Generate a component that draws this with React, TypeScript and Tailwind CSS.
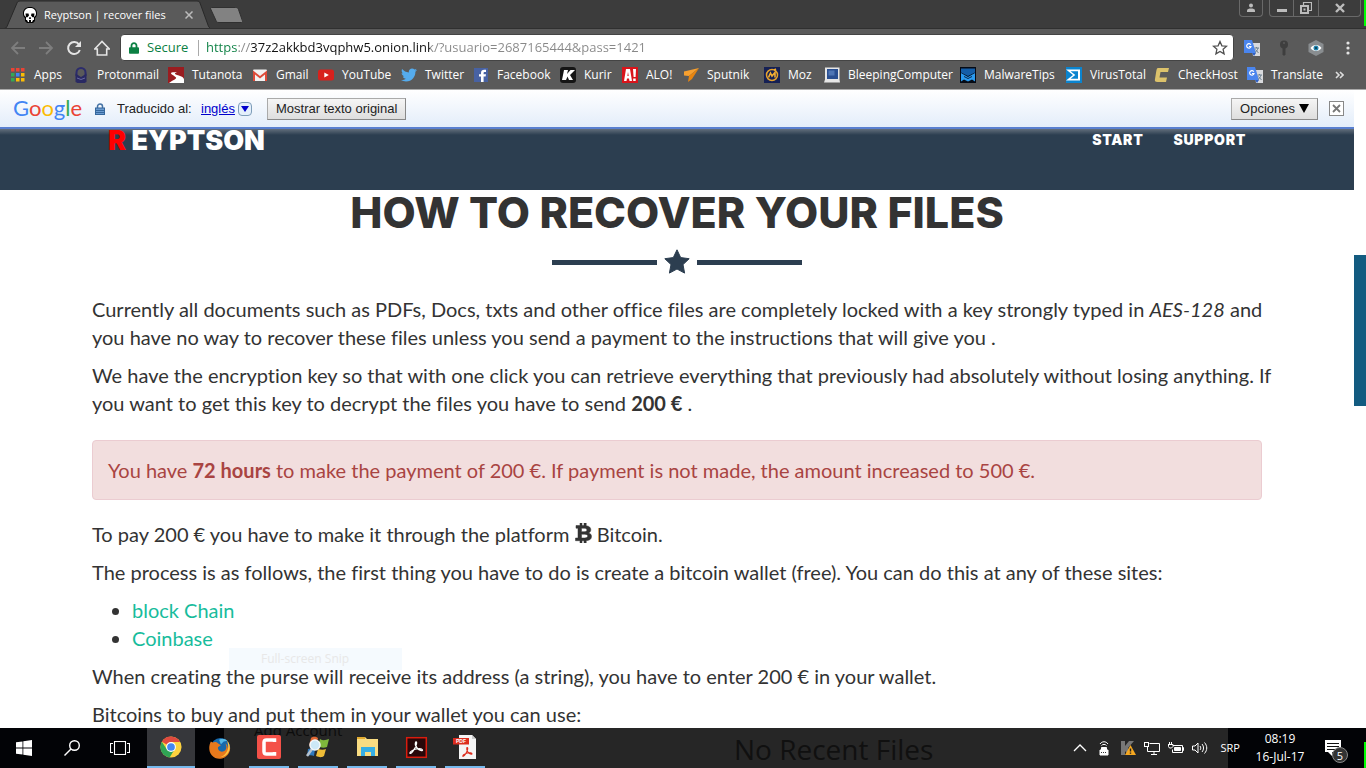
import React from "react";
import { FaTwitter, FaLock } from "react-icons/fa";

const SkullIcon = () => (
  <svg viewBox="0 0 16 16" className="h-4 w-4 shrink-0">
    <path d="M8 0C3.500 0 1 2.500 1 6.500c0 2 .8 3.500 2 4.500v3l2 2h6l2-2v-3c1.200-1 2-2.500 2-4.500C15 2.500 12.500 0 8 0z" fill="#000" />
    <path d="M8 1C4.300 1 2 3 2 6.500c0 1.600.5 2.700 2 3.500v3h1l1 2h1v-2h2v2h1l1-2h1v-3c1.500-.8 2-1.900 2-3.500C14 3 11.700 1 8 1z" fill="#fff" />
    <path d="M3.500 6.500h3l.5 2-1.500 1.800H4zM9.500 6.500h3l-.5 3.800h-1.500L9 8.500zM7.500 10h1l.5 2H7z" fill="#000" />
  </svg>
);

const AppsIcon = () => (
  <svg viewBox="0 0 16 16" className="h-4 w-4">
    {["#ea4335", "#ea4335", "#ea4335", "#34a853", "#4285f4", "#fbbc05", "#34a853", "#fbbc05", "#fbbc05"].map((c, i) => (
      <rect key={i} x={1 + (i % 3) * 5} y={1 + Math.floor(i / 3) * 5} width="3.500" height="3.500" fill={c} />
    ))}
  </svg>
);
const ProtonIcon = () => (
  <svg viewBox="0 0 16 16" className="h-4 w-4" fill="none">
    <path d="M3.500 9V5.500a4.500 4.500 0 0 1 9 0V9" stroke="#2c2c6c" strokeWidth="2" />
    <path d="M2.500 6.500L8 10l5.500-3.500V15l-2 1h-7l-2-1z" fill="#292963" />
    <path d="M4 11l4 1.500 4-1.500" stroke="#6868a0" />
  </svg>
);
const TutaIcon = () => (
  <svg viewBox="0 0 16 16" className="h-4 w-4">
    <rect width="16" height="16" fill="#9a1c20" />
    <path d="M1 16c4-3 8-4 7-5.500S3 7.500 3 6.200 6.500 5 9 5.500C7 6 6 6.500 8 7.500s8 2 8 5V16z" fill="#fff" />
  </svg>
);
const GmailIcon = () => (
  <svg viewBox="0 0 16 16" className="h-4 w-4">
    <rect x="1" y="2.500" width="14" height="11.500" rx="1" fill="#f2f2f2" />
    <path d="M1 3.500L8 9l7-5.500V14h-2V7.500l-5 4-5-4V14H1z" fill="#dd4b39" />
  </svg>
);
const YouTubeIcon = () => (
  <svg viewBox="0 0 16 16" className="h-4 w-4">
    <rect x="0" y="2.500" width="16" height="11" rx="2.500" fill="#d8211c" />
    <path d="M6.300 5.500v5L10.800 8z" fill="#fff" />
  </svg>
);
const FacebookIcon = () => (
  <svg viewBox="0 0 16 16" className="h-4 w-4">
    <rect x="1" y="1" width="14" height="14" fill="#4862a3" />
    <path d="M8 15V9.500H6V7.300h2V6c0-2.200 1.200-3.300 3.200-3.300H13V5h-1.300c-.9 0-1.100.5-1.100 1.200v1.100H13l-.4 2.200h-2V15z" fill="#fff" />
  </svg>
);
const KurirIcon = () => (
  <svg viewBox="0 0 16 16" className="h-4 w-4">
    <rect width="16" height="16" rx="3" fill="#151515" />
    <path d="M4 3h4l-1 4 3.500-4H15L10 8l3 5H9L7.500 9.500 6 13H2z" fill="#fff" />
  </svg>
);
const AloIcon = () => (
  <svg viewBox="0 0 16 16" className="h-4 w-4">
    <rect width="16" height="16" fill="#d9141b" />
    <path d="M4 2h4l2 12H7.500L7 11.500H5L4.500 14H2zm1.400 7h1.300L6 5zM11 2h3l-.4 8h-2zM11.200 11.500h2.500V14h-2.500z" fill="#fff" fillRule="evenodd" />
  </svg>
);
const SputnikIcon = () => (
  <svg viewBox="0 0 16 16" className="h-4 w-4">
    <path d="M16 1L1 4.500v4L6 9z" fill="#f7a02f" />
    <path d="M16 1L6 9l-1 6 4-3z" fill="#e8850f" />
  </svg>
);
const MozIcon = () => (
  <svg viewBox="0 0 16 16" className="h-4 w-4" fill="none">
    <rect width="16" height="16" fill="#152054" />
    <circle cx="8" cy="8" r="5.500" stroke="#e5a22e" strokeWidth="1.500" />
    <path d="M4.500 10.500L6.500 6l1.500 3 3-3.500v5M10 3l2-1" stroke="#f1ad33" strokeWidth="1.600" />
  </svg>
);
const BleepIcon = () => (
  <svg viewBox="0 0 16 16" className="h-4 w-4">
    <path d="M1 .5h14.500v12l.5 3H0l1-3z" fill="#e6e6e6" />
    <rect x="3" y="2" width="11" height="10" fill="#2a4f91" />
    <rect x="4.500" y="3.500" width="6" height="5" fill="#4f76b5" />
  </svg>
);
const MalwareTipsIcon = () => (
  <svg viewBox="0 0 16 16" className="h-4 w-4">
    <rect width="16" height="16" fill="#050b16" />
    <path d="M1 1.500h14v4L8 9 1 5.500z" fill="#145ea8" />
    <path d="M1 6l7 4 7-4v8.500l-3-2-4 2-4-2-3 2z" fill="#2a9bf0" />
    <path d="M4 9.500l4 2 4-2" fill="none" stroke="#0a2547" />
  </svg>
);
const VirusTotalIcon = () => (
  <svg viewBox="0 0 16 16" className="h-4 w-4">
    <rect width="16" height="16" fill="#0a84cf" />
    <path d="M0 2.500L7 8l-7 5.500h14v-11z" fill="#fff" />
    <path d="M4.500 4.200H12v7.600H4.500L9.300 8z" fill="#0a84cf" />
  </svg>
);
const CheckHostIcon = () => (
  <svg viewBox="0 0 16 16" className="h-4 w-4">
    <path d="M4 1h11l-1 4H6.500L5.500 10.500H13l-1 4.500H3.500C1 15 .5 14 1 12L2.300 4C2.700 2 3 1 4 1z" fill="#dcc26b" />
  </svg>
);
const TranslateIcon = () => (
  <svg viewBox="0 0 16 16" className="h-4 w-4" fill="none">
    <path d="M7 3h9v13H9z" fill="#d9dadd" />
    <path d="M0 0h8l4 13H0z" fill="#4a85ee" />
    <path d="M8 13h4l-2 3z" fill="#2d5fc4" />
    <path d="M6.800 4.800A2.200 2.200 0 1 0 7 6.500H5" stroke="#fff" strokeWidth="1.200" />
    <path d="M10.500 8h4.500M12.500 7v1M14 8c-.5 2-1.500 3.500-3 4.500M11.500 9.500l3 3.500" stroke="#6d8190" />
  </svg>
);
const TwitterIcon = () => <FaTwitter className="h-4 w-4 text-[#55acee]" />;

const bookmarks: [string, string, React.FC][] = [
  ["Apps", "w-[63px]", AppsIcon],
  ["Protonmail", "w-[95px]", ProtonIcon],
  ["Tutanota", "w-[84px]", TutaIcon],
  ["Gmail", "w-[66px]", GmailIcon],
  ["YouTube", "w-[83px]", YouTubeIcon],
  ["Twitter", "w-[72px]", TwitterIcon],
  ["Facebook", "w-[87px]", FacebookIcon],
  ["Kurir", "w-[62px]", KurirIcon],
  ["ALO!", "w-[61px]", AloIcon],
  ["Sputnik", "w-[81px]", SputnikIcon],
  ["Moz", "w-[60px]", MozIcon],
  ["BleepingComputer", "w-[136px]", BleepIcon],
  ["MalwareTips", "w-[106px]", MalwareTipsIcon],
  ["VirusTotal", "w-[88px]", VirusTotalIcon],
  ["CheckHost", "w-[93px]", CheckHostIcon],
  ["Translate", "w-[84px]", TranslateIcon],
];

function TabStrip() {
  return (
    <header className="flex h-7 shrink-0 bg-[#3c3c3c]">
      <div className="relative flex h-7 w-[210px] items-center pt-[2px] pl-[22px] text-[11px] text-white">
        <svg viewBox="0 0 210 28" className="absolute inset-0 h-7 w-[210px]">
          <path d="M0 28.500h4c2 0 2.500-1 3-2L17 3c.6-1.300 1-2 3-2h177c2 0 2.500.7 3 2l8 22c.7 2 1 3 3 3.500z" fill="#5a5a5a" stroke="#282828" />
        </svg>
        <span className="relative flex items-center">
          <SkullIcon />
          <span className="ml-1.5 w-[138px] whitespace-nowrap">Reyptson | recover files</span>
          <button aria-label="Close tab" className="ml-[3px]">
            <svg viewBox="0 0 8 8" className="h-2 w-2"><path d="M.5.5l7 7m0-7l-7 7" stroke="#bbb" strokeWidth="1.500" /></svg>
          </button>
        </span>
      </div>
      <button aria-label="New tab" className="h-7 w-8">
        <svg viewBox="0 0 32 28" className="h-7 w-8">
          <path d="M1.500 7.500h24c2 0 2.500.6 3 2l4 11.500c.4 1.300 0 1.500-1 1.500H9c-2 0-2.500-.5-3-2L.7 9c-.3-1 0-1.500.8-1.500z" fill="#828282" stroke="#303030" />
        </svg>
      </button>
      <div className="ml-auto flex h-[17px] gap-[6px] text-[#bcbcbc]">
        <button aria-label="Profile" className="flex w-6 items-center justify-center rounded-b border border-t-0 border-[#696969]">
          <svg viewBox="0 0 10 10" className="h-2.5 w-2.5" fill="currentColor"><circle cx="5" cy="2.500" r="2" /><path d="M1 9V7.500C1 6 3 5.500 5 5.500s4 .5 4 2V9z" /></svg>
        </button>
        <div className="mr-[3px] flex rounded-b border border-t-0 border-[#696969]">
          <button aria-label="Minimize" className="flex w-6 items-center justify-center border-r border-[#696969]">
            <svg viewBox="0 0 12 10" className="h-2.5 w-3"><rect x="1" y="6" width="10" height="3" fill="#bcbcbc" /></svg>
          </button>
          <button aria-label="Restore" className="flex w-[25px] items-center justify-center border-r border-[#696969]">
            <svg viewBox="0 0 12 12" className="h-3 w-3" fill="none" stroke="#bcbcbc"><path d="M3.500 3V.5h8v8H9" strokeWidth="1.200" /><rect x="1" y="4" width="7" height="7" strokeWidth="2" /><rect x="4" y="7" width="1" height="1" /></svg>
          </button>
          <button aria-label="Close" className="flex w-[41px] items-center justify-center">
            <svg viewBox="0 0 10 10" className="h-2.5 w-2.5"><path d="M1 1l8 8m0-8L1 9" stroke="#bcbcbc" strokeWidth="2.400" /></svg>
          </button>
        </div>
        <div className="-ml-[6px] h-[26px] w-0.5 bg-[#00ff00]" />
      </div>
    </header>
  );
}

function Toolbar() {
  return (
    <div className="flex h-[34px] shrink-0 items-center border-t border-[#303030] pt-1">
      <div className="flex w-[120px] items-center gap-3 pl-[10px]">
        <button aria-label="Back"><svg viewBox="0 0 16 16" className="h-4 w-4" fill="none" stroke="#7e7e7e" strokeWidth="1.800"><path d="M15 8H2m6-6L2 8l6 6" /></svg></button>
        <button aria-label="Forward"><svg viewBox="0 0 16 16" className="h-4 w-4" fill="none" stroke="#7e7e7e" strokeWidth="1.800"><path d="M1 8h13M8 2l6 6-6 6" /></svg></button>
        <button aria-label="Reload"><svg viewBox="0 0 16 16" className="h-4 w-4" fill="none" stroke="#e4e4e4" strokeWidth="2"><path d="M13 4.500A6 6 0 1 0 13.800 10" /><path d="M15 1v6H9z" fill="#e4e4e4" stroke="none" /></svg></button>
        <button aria-label="Home"><svg viewBox="0 0 16 16" className="h-4 w-4" fill="none" stroke="#e4e4e4" strokeWidth="1.600"><path d="M.7 9L8 1.500 15.300 9H12.700v6H3.300V9z" /></svg></button>
      </div>
      <div className="flex h-[27px] flex-1 items-center rounded-sm border border-[#444] bg-white text-[13px]">
        <FaLock className="ml-2 h-3 w-[10px] text-[#0b8043]" />
        <label htmlFor="url" className="ml-2 w-[51px] text-[#0b8043]">Secure</label>
        <span className="h-4 w-px bg-[#aaa]" />
        <input
          id="url"
          className="ml-[7px] flex-1 bg-[linear-gradient(90deg,#0b8043_0px,#0b8043_32px,#888_32px,#888_45px,#111_45px,#111_224px,#888_224px)] bg-clip-text text-[13px] text-transparent caret-black outline-none"
          defaultValue="https://37z2akkbd3vqphw5.onion.link/?usuario=2687165444&pass=1421"
        />
        <button aria-label="Bookmark this page" className="mr-[5px]">
          <svg viewBox="0 0 16 16" className="h-4 w-4" fill="none" stroke="#505050" strokeWidth="1.300"><path d="M8 1.500l1.900 4.300 4.700.4-3.500 3.100 1 4.600L8 11.500l-4.100 2.400 1-4.600L1.400 6.200l4.700-.4z" /></svg>
        </button>
      </div>
      <div className="flex w-[132px] items-center gap-4 pl-[10px]">
        <button aria-label="Google Translate"><TranslateIcon /></button>
        <button aria-label="Passwords"><svg viewBox="0 0 16 16" className="h-4 w-4"><circle cx="8" cy="4.500" r="4" fill="#3e3e3e" /><path d="M6.500 7h3v7.500L8 16l-1.500-1.500z" fill="#3e3e3e" /><circle cx="8" cy="3" r="1" fill="#5a5a5a" /></svg></button>
        <button aria-label="Privacy"><svg viewBox="0 0 16 16" className="h-4 w-4"><path d="M8 0l7.500 4v8L8 16 .5 12V4z" fill="#898d90" /><path d="M2.500 8C5 4 11 4 13.500 8 11 12 5 12 2.500 8z" fill="#fff" /><circle cx="8" cy="8" r="2.500" fill="#2183ad" /><circle cx="8" cy="8" r="1" fill="#073449" /></svg></button>
        <button aria-label="Menu"><svg viewBox="0 0 16 16" className="h-4 w-4" fill="#e4e4e4"><circle cx="8" cy="3" r="1.600" /><circle cx="8" cy="8" r="1.600" /><circle cx="8" cy="13" r="1.600" /></svg></button>
      </div>
    </div>
  );
}

function Bookmarks() {
  return (
    <nav className="flex h-7 shrink-0 items-center overflow-hidden border-b border-[#aaa] pb-px pl-[10px] text-xs text-white">
      {bookmarks.map(([name, width, Icon]) => (
        <a key={name} href="#" className={"flex shrink-0 items-center gap-2 whitespace-nowrap " + width}>
          <Icon />
          {name}
        </a>
      ))}
      <button aria-label="More bookmarks" className="ml-1">
        <svg viewBox="0 0 9 8" className="h-2 w-[9px]" fill="none" stroke="#ddd" strokeWidth="1.600"><path d="M1 1l3 3-3 3M5 1l3 3-3 3" /></svg>
      </button>
    </nav>
  );
}

function TranslateBar() {
  const button = "h-[22px] border border-[#aaa] border-r-[#888] border-b-[#888] bg-linear-to-b from-[#f5f5f5] to-[#dedede] px-2 text-[13px] leading-5 whitespace-nowrap text-[#222]";
  return (
    <div className="flex h-[39px] shrink-0 items-center border-b-2 border-[#587fd0] bg-linear-to-b from-white to-[#e3edfa] pr-[10px] pl-[13px] font-['Liberation_Sans',sans-serif] text-[13px] text-[#222]">
      <span className="w-[82px] pb-0.5 font-[Lato,sans-serif] text-[22px] leading-8">
        <span className="text-[#4285f4]">G</span><span className="text-[#ea4335]">o</span><span className="text-[#fbbc05]">o</span><span className="text-[#4285f4]">g</span><span className="text-[#34a853]">l</span><span className="text-[#ea4335]">e</span>
      </span>
      <svg viewBox="0 0 10 12" className="h-3 w-[10px]" fill="none"><path d="M2.500 6V3.500a2.500 2.500 0 0 1 5 0V6" stroke="#4673a5" strokeWidth="1.500" /><rect x=".5" y="5" width="9" height="6.500" fill="#6b9bd0" stroke="#35679c" /><path d="M1 7.500h8M1 9.500h8" stroke="#35679c" /></svg>
      <span className="ml-3 w-[84px]">Traducido al:</span>
      <a href="#" className="text-[#0000cc] underline">inglés</a>
      <button aria-label="Choose language" className="ml-[3px] flex h-[14px] w-[14px] items-center justify-center rounded-sm border border-[#7e9db9] bg-[#e4effb]">
        <svg viewBox="0 0 8 6" className="h-1.5 w-2"><path d="M0 0h8L4 6z" fill="#00c" /></svg>
      </button>
      <button className={button + " ml-[15px]"}>Mostrar texto original</button>
      <button className={button + " ml-auto flex items-center gap-1"}>Opciones <svg viewBox="0 0 10 9" className="h-[9px] w-[10px]"><path d="M0 0h10L5 9z" fill="#000" /></svg></button>
      <button aria-label="Close translation bar" className="ml-[11px] flex h-[15px] w-[15px] items-center justify-center border border-[#888] bg-white">
        <svg viewBox="0 0 9 9" className="h-[9px] w-[9px]"><path d="M1 1l7 7m0-7L1 8" stroke="#777" strokeWidth="1.800" /></svg>
      </button>
    </div>
  );
}

const StarMark = () => (
  <svg viewBox="0 0 26 26" className="h-[26px] w-[26px]"><path d="M13 .8l3.700 7.800 8.500 1.100-6.200 5.900 1.600 8.500L13 20l-7.600 4.100L7 15.600.8 9.700l8.500-1.100z" fill="#2c3e50" stroke="#2c3e50" strokeLinejoin="round" /></svg>
);
const BitcoinMark = () => (
  <svg viewBox="0 0 17 20" className="inline h-5 w-[17px] align-[-1px]">
    <path d="M1 2.500h4V0h2v2.500h2V0h2.200v2.700c2.900.4 4.600 1.800 4.600 4 0 1.500-.8 2.600-2.300 3.200 2 .5 3 1.800 3 3.600 0 2.500-1.900 4-5.300 4.200V20H9v-2.300H7V20H5v-2.300H.5V15H3V5.200H1zM6.500 5.200v3.500h2.400c2 0 3-.6 3-1.800 0-1.100-1-1.700-3-1.700zm0 6V15h3c2.100 0 3.200-.7 3.200-1.900s-1.100-1.900-3.200-1.900z" fill="#333" stroke="#333" strokeWidth=".5" fillRule="evenodd" />
  </svg>
);

function Page() {
  return (
    <main className="min-w-0 flex-1 overflow-hidden bg-white font-[Lato,sans-serif] text-xl leading-7 text-[#333] [font-variant-ligatures:none]">
      <TranslateBar />
      <div className="h-[61px] bg-[#2c3e50] bg-[linear-gradient(#626e7b,#2c3e50_6px)] font-[Inter,sans-serif] font-black text-white">
        <div className="mx-auto flex h-[22px] max-w-[1170px] items-center px-4">
          <a href="#" className="text-[27px] leading-none whitespace-nowrap"><span className="text-[#f00]">R</span> EYPTSON</a>
          <a href="#" className="mr-[30px] ml-auto text-sm tracking-wider">START</a>
          <a href="#" className="text-sm tracking-wider">SUPPORT</a>
        </div>
      </div>
      <div className="mx-auto max-w-[1170px]">
        <h1 className="text-center font-[Inter,sans-serif] text-[43px] leading-[45px] font-extrabold">HOW TO RECOVER YOUR FILES</h1>
        <div className="mt-[13px] mb-[19px] flex h-7 items-center justify-center gap-[7px]">
          <span className="h-[5px] w-[105px] bg-[#2c3e50]" />
          <StarMark />
          <span className="h-[5px] w-[105px] bg-[#2c3e50]" />
        </div>
        <p className="mb-[10px] xl:whitespace-nowrap">Currently all documents such as PDFs, Docs, txts and other office files are completely locked with a key strongly typed in <em>AES-128</em> and{" "}<br className="hidden xl:inline" />you have no way to recover these files unless you send a payment to the instructions that will give you .</p>
        <p className="xl:whitespace-nowrap">We have the encryption key so that with one click you can retrieve everything that previously had absolutely without losing anything. If{" "}<br className="hidden xl:inline" />you want to get this key to decrypt the files you have to send <strong>200 €</strong> .</p>
        <div className="mt-[23px] mb-5 rounded border border-[#ebccd1] bg-[#f2dede] p-[15px] text-[#a94442]">You have <strong>72 hours</strong> to make the payment of 200 €. If payment is not made, the amount increased to 500 €.</div>
        <p className="mb-[10px]">To pay 200 € you have to make it through the platform <BitcoinMark /> Bitcoin.</p>
        <p className="mb-[10px]">The process is as follows, the first thing you have to do is create a bitcoin wallet (free). You can do this at any of these sites:</p>
        <div className="relative mb-[10px]">
          <ul className="list-disc pl-10">
            <li><a href="#" className="text-[#18bc9c]">block Chain</a></li>
            <li><a href="#" className="text-[#18bc9c]">Coinbase</a></li>
          </ul>
          <div aria-hidden="true" className="absolute top-[52px] left-[137px] h-[22px] w-[173px] bg-[#f5fafe] pl-8 font-['Open_Sans',sans-serif] text-xs leading-[22px] text-[#e8e8e8]">Full-screen Snip</div>
        </div>
        <p className="relative mb-[10px]">When creating the purse will receive its address (a string), you have to enter 200 € in your wallet.</p>
        <p>Bitcoins to buy and put them in your wallet you can use:</p>
      </div>
    </main>
  );
}

const ChromeIcon = () => (
  <svg viewBox="0 0 24 24" className="h-[22px] w-[22px]">
    <circle cx="12" cy="12" r="11.500" fill="#fdd23f" />
    <path d="M12 12L2 6.200A11.500 11.500 0 0 1 22 6.500H12z" fill="#e04a3f" />
    <path d="M2 6.200A11.500 11.500 0 0 0 10.500 23.400L16 14.500 12 12 7 14z" fill="#2fa455" />
    <circle cx="12" cy="12" r="5.400" fill="#fff" /><circle cx="12" cy="12" r="4.200" fill="#4587f3" />
  </svg>
);
const FirefoxIcon = () => (
  <svg viewBox="0 0 24 24" className="h-[22px] w-[22px]">
    <circle cx="12.500" cy="11.500" r="10.500" fill="#1769ac" />
    <path d="M11 3c3-2 7-1 9 1l-4 1-3 3z" fill="#56b8e5" />
    <path d="M2 5l2 1c2-1 4-1 6 1l3 2-3 2c-1 2 1 5 4 5 5 0 6-5 4-9 3 2 2 5 3 6 1-3 0-6-1-8 3 3 4 8 2 12-4 8-14 9-19 3C-1 15 0 9 2 5z" fill="#e8791c" />
    <path d="M20 4c3 4 3 8 2 11-2 5-6 7-10 7 6-2 9-7 9-12z" fill="#fcc742" />
  </svg>
);
const RecorderIcon = () => (
  <svg viewBox="0 0 24 24" className="h-6 w-6"><rect width="24" height="24" rx="2" fill="#f45148" /><path d="M17.500 7V5H9.500C7.500 5 7 5.500 7 7.500v9c0 2 .5 2.500 2.500 2.500h8v-2" fill="none" stroke="#fff" strokeWidth="3.500" /></svg>
);
const WindowsSearchIcon = () => (
  <svg viewBox="0 0 24 24" className="h-6 w-6"><path d="M5 3c3-2 5-1 7 0l-2 8c-2-1-4-2-7 0z" fill="#df6632" /><path d="M14 4c3 2 6 1 9 0l-2 8c-3 1-6 1-9-1z" fill="#7fb83c" /><path d="M2 14c3-1 5-1 7 0l-1 7c-2-1-5-1-7 0z" fill="#3079bd" /><path d="M12 14c3 1 6 1 8 0l-2 7c-3 2-5 1-8 0z" fill="#eebc37" /><path d="M6 14l-5 7" stroke="#b6c2ce" strokeWidth="2.500" /><circle cx="9" cy="10" r="5" fill="#cce8f7" stroke="#f3f7fa" strokeWidth="1.500" /></svg>
);
const ExplorerIcon = () => (
  <svg viewBox="0 0 24 24" className="h-6 w-6"><path d="M2 4V2h8l2 2h11v17H2z" fill="#f9dc82" /><path d="M2 4V2h8v2z" fill="#e3ac31" /><path d="M6 21v-9h14v9h-4v-4h-6v4z" fill="#35aee5" /></svg>
);
const AcrobatIcon = () => (
  <svg viewBox="0 0 24 24" className="h-6 w-6"><rect x="2.700" y="2.700" width="19.600" height="19.600" fill="#28080a" stroke="#d91c0e" strokeWidth="1.500" /><path d="M6 18.500c-1-1.500 3.500-4 6-4.500s6-.5 6.500 1-3.500 0-5-1.500c-2-2-2.500-4.500-2-6s1.500-.5 1 1.500C12 12 8 18.500 6 18.500z" fill="none" stroke="#fff" strokeWidth="1.200" /></svg>
);
const PdfIcon = () => (
  <svg viewBox="0 0 24 24" className="h-6 w-6">
    <path d="M6 0h13l4 4v20H6z" fill="#f5f5f5" /><path d="M19 0v4h4z" fill="#ccc" /><rect x="0" y="3" width="16" height="6.500" fill="#dc2c1d" />
    <text x="3" y="8" fontSize="5" fontWeight="bold" fill="#fff" fontFamily="Liberation Sans, sans-serif">PDF</text>
    <path d="M10 21.500c-1-1 2.500-3 4.500-3.500s4.500-.2 4.500.8-2.500 0-3.700-1.200c-1.500-1.500-1.800-3.500-1.500-4.600s1.200-.3.900 1.200c-.5 2.500-3.200 7.300-4.700 7.300z" fill="none" stroke="#dc2c1d" strokeWidth="1.100" />
  </svg>
);

const runningApps: [string, React.FC][] = [
  ["Recorder", RecorderIcon],
  ["Search tool", WindowsSearchIcon],
  ["File Explorer", ExplorerIcon],
  ["Acrobat", AcrobatIcon],
  ["PDF document", PdfIcon],
];

function Taskbar() {
  const tray = "h-4 w-4";
  return (
    <footer className="relative flex h-10 shrink-0 overflow-hidden bg-[linear-gradient(90deg,#020306_224px,#262626_224px)] text-xs text-white">
      <div aria-hidden="true" className="absolute -top-2 left-[254px] text-[15px] leading-5 text-[#0c0c0c]">Add Account</div>
      <div aria-hidden="true" className="absolute top-0 left-[734px] text-[28px] leading-[42px] text-[#101010]">No Recent Files</div>
      <button aria-label="Start" className="flex w-12 items-center justify-center"><svg viewBox="0 0 16 16" className="h-4 w-4" fill="#fff"><path d="M0 2.300L6.500 1.400v6.100H0zM7.300 1.300L16 0v7.500H7.300zM0 8.400h6.500v6.200L0 13.700zM7.300 8.400H16V16l-8.700-1.300z" /></svg></button>
      <button aria-label="Search" className="flex w-12 items-center justify-center"><svg viewBox="0 0 16 16" className="h-4 w-4" fill="none" stroke="#fff" strokeWidth="1.400"><circle cx="10.500" cy="5.500" r="4.800" /><path d="M7 9L.5 15.500" /></svg></button>
      <button aria-label="Task view" className="mr-[3px] flex w-12 items-center justify-center"><svg viewBox="0 0 20 14" className="h-[14px] w-5" fill="none" stroke="#fff" strokeWidth="1.100"><rect x="4.500" y=".5" width="11" height="13" /><path d="M3 2.500H.5v9H3M17 2.500h2.500v9H17" /></svg></button>
      <button aria-label="Chrome" className="flex w-12 items-center justify-center border-b-2 border-[#76b9ed] bg-[#36373b]"><ChromeIcon /></button>
      <button aria-label="Firefox" className="flex w-[49px] items-center justify-center"><FirefoxIcon /></button>
      {runningApps.map(([name, Icon]) => (
        <button key={name} aria-label={name} className="relative flex w-[49px] justify-center">
          <span className="flex w-10 items-center justify-center border-b-2 border-[#76b9ed]"><Icon /></span>
        </button>
      ))}
      <div className="relative z-10 ml-auto flex items-center gap-2">
        <svg viewBox="0 0 16 16" className={tray} fill="none" stroke="#fff" strokeWidth="1.300"><path d="M2 11l6-6 6 6" /></svg>
        <svg viewBox="0 0 16 16" className={tray} fill="none" stroke="#fff"><path d="M4 4c2-3 6-3 8 0M5.500 5.500c1-1.500 4-1.500 5 0" /><path d="M5.500 7.500h5V10H12v5H4v-5h1.500z" fill="#fff" /><path d="M5 12.500h1m1 0h1m1 0h1" stroke="#333" /></svg>
        <svg viewBox="0 0 16 16" className={tray}><path d="M1 1h4v5l4-5h5L8 8l6 7H8L5 11v4H1z" fill="#777" /><path d="M10.500 5L16 15H5z" fill="#f6a821" /><path d="M10.500 8.500v3M10.500 12.500v1.300" stroke="#222" strokeWidth="1.400" /></svg>
        <svg viewBox="0 0 16 16" className={tray} fill="none" stroke="#fff"><path d="M5.500 3.500h10v8H3.500V7M7 14.500h6M10 12v2.500" /><rect x=".5" y="2.500" width="4" height="4" /></svg>
        <svg viewBox="0 0 16 16" className={tray} fill="none" stroke="#fff"><path d="M5 5.500h9.500v7h-10v-3M14.500 7.500h1v3h-1M0 4.500h5v2L3.500 8h-2L.5 6.500v-2M1.500 2v2M3.500 2v2" /><path d="M6.500 7.500h6v3h-6z" fill="#fff" /></svg>
        <svg viewBox="0 0 16 16" className={tray} fill="none" stroke="#fff"><path d="M.5 6v4H3l3 3V3L3 6zM8 6c1 1.500 1 3 0 4M10 4c2 2.500 2 5.500 0 8M12.500 2.500c3 3.500 3 7.500 0 11" /></svg>
        <span className="w-6 text-right text-[11px]">SRP</span>
      </div>
      <div className="-ml-3 flex w-[138px] bg-[#020306]">
        <div className="flex w-[104px] flex-col items-center justify-center text-xs leading-[18px]">
          <time>08:19</time>
          <time className="whitespace-nowrap">16-Jul-17</time>
        </div>
        <button aria-label="5 notifications" className="relative flex-1">
          <svg viewBox="0 0 16 16" className="-ml-[7px] h-4 w-4"><path d="M0 0h16v12H7v4l-4-4H0z" fill="#fff" /><path d="M2 3.500h12M2 6.500h12M2 9.500h8" stroke="#111" /></svg>
          <span className="absolute top-[19px] left-0 flex h-4 w-4 items-center justify-center rounded-full border border-[#888] bg-[#333] text-[11px] leading-none">5</span>
        </button>
        <span className="mt-[14px] w-0.5 bg-[#00ff00]" />
      </div>
    </footer>
  );
}

export default function App() {
  return (
    <div className="flex h-screen flex-col overflow-hidden bg-[#5a5a5a] font-['Open_Sans',sans-serif]">
      <TabStrip />
      <Toolbar />
      <Bookmarks />
      <div className="flex min-h-0 flex-1 overflow-hidden">
        <Page />
        <aside className="w-3 shrink-0 bg-white pt-[165px]"><div className="h-[151px] bg-[#135b80]" /></aside>
      </div>
      <Taskbar />
    </div>
  );
}
